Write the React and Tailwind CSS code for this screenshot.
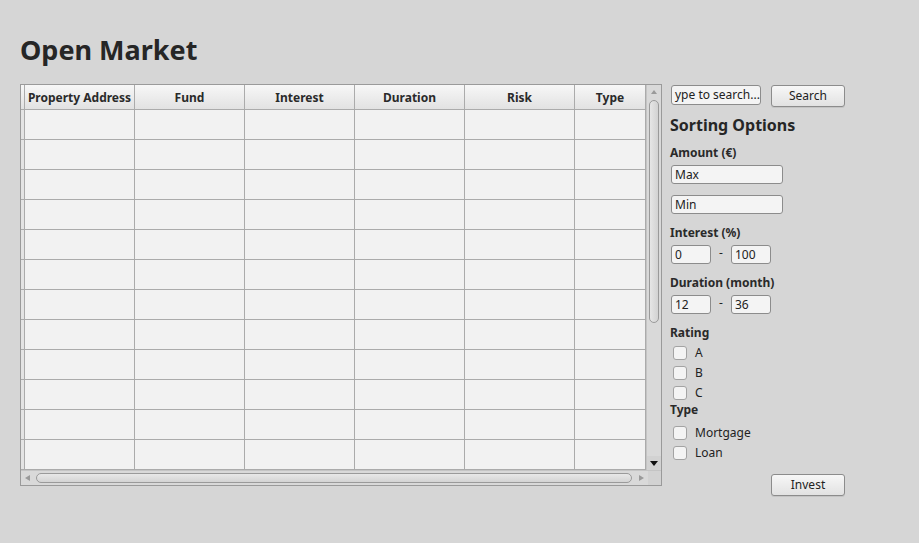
import React from "react";

const columns = ["Property Address", "Fund", "Interest", "Duration", "Risk", "Type"];
const rows = Array.from({ length: 12 });

function Cell({ children, last, header }) {
  return (
    <div
      className={
        (last ? "w-[71px]" : "w-[110px]") +
        " shrink-0 border-r border-[#ababab] flex items-center justify-center"
      }
    >
      {header && <span className="pt-[2px] font-bold text-[12px] text-[#2a2a2a] whitespace-nowrap">{children}</span>}
    </div>
  );
}

function Input({ value, className }) {
  return (
    <div
      className={
        "h-[19px] rounded-[3px] border border-[#8c8c8c] bg-[#f4f4f4] px-[3px] text-[12px] leading-[17px] text-[#222] overflow-hidden whitespace-nowrap " +
        className
      }
    >
      {value}
    </div>
  );
}

function Button({ label }) {
  return (
    <div className="w-[74px] h-[22px] rounded-[3px] border border-[#8c8c8c] bg-gradient-to-b from-[#f7f7f7] to-[#e2e2e2] flex items-center justify-center text-[12px] text-[#222] shadow-[0_1px_0_#c4c4c4]">
      {label}
    </div>
  );
}

function Check({ label }) {
  return (
    <div className="h-[20px] flex items-center">
      <div className="ml-[3px] w-[14px] h-[14px] rounded-[3px] border border-[#a3a3a3] bg-[#f4f4f4]" />
      <span className="ml-[8px] text-[12px] text-[#222]">{label}</span>
    </div>
  );
}

function Label({ children, className = "" }) {
  return <div className={"text-[12px] leading-[17px] font-bold text-[#2a2a2a] " + className}>{children}</div>;
}

export default function App() {
  return (
    <div
      className="w-[919px] h-[543px] bg-[#d6d6d6] pl-[20px] pt-[32px] overflow-hidden"
      style={{ fontFamily: '"Noto Sans", "Open Sans", sans-serif' }}
    >
      <h1 className="text-[27px] leading-[36px] font-bold text-[#262626]">Open Market</h1>

      <div className="mt-[16px] flex items-start">
        {/* table */}
        <div className="w-[642px] h-[402px] border border-[#9a9a9a] bg-[#f2f2f2] flex flex-col">
          <div className="flex flex-1">
            <div className="flex flex-col">
              {/* header */}
              <div className="flex h-[25px] border-b border-[#ababab] bg-gradient-to-b from-[#f7f7f7] to-[#e2e2e2]">
                <div className="w-[3px] border-r border-[#ababab] shrink-0 box-content" />
                {columns.map((c, i) => (
                  <Cell key={c} header last={i === columns.length - 1}>{c}</Cell>
                ))}
              </div>
              {rows.map((_, r) => (
                <div key={r} className="flex h-[30px] border-b border-[#ababab]">
                  <div className="w-[3px] border-r border-[#ababab] shrink-0 box-content bg-[#e4e4e4]" />
                  {columns.map((c, i) => (
                    <Cell key={c} last={i === columns.length - 1} />
                  ))}
                </div>
              ))}
            </div>
            {/* vertical scrollbar */}
            <div className="w-[15px] h-[385px] bg-[#d9d9d9] border-l border-[#c4c4c4] flex flex-col items-center">
              <div className="h-[14px] flex items-center justify-center">
                <div className="w-0 h-0 border-l-[3px] border-r-[3px] border-b-[4px] border-l-transparent border-r-transparent border-b-[#9a9a9a]" />
              </div>
              <div className="mt-[1px] w-[10px] h-[223px] rounded-[5px] border border-[#9a9a9a] bg-gradient-to-r from-[#e6e6e6] to-[#d2d2d2]" />
              <div className="flex-1" />
              <div className="w-full h-[14px] bg-[#d2d2d2] flex items-center justify-center">
                <div className="w-0 h-0 border-l-[4px] border-r-[4px] border-t-[5px] border-l-transparent border-r-transparent border-t-[#111]" />
              </div>
            </div>
          </div>
          {/* horizontal scrollbar */}
          <div className="h-[15px] flex items-center bg-[#d9d9d9] border-t border-[#c4c4c4]">
            <div className="w-[13px] h-full flex items-center justify-center">
              <div className="w-0 h-0 border-t-[3px] border-b-[3px] border-r-[5px] border-t-transparent border-b-transparent border-r-[#9a9a9a]" />
            </div>
            <div className="ml-[2px] w-[596px] h-[10px] rounded-[5px] border border-[#9a9a9a] bg-gradient-to-b from-[#e8e8e8] to-[#d4d4d4]" />
            <div className="w-[14px] ml-[2px] flex items-center justify-center">
              <div className="w-0 h-0 border-t-[3px] border-b-[3px] border-l-[5px] border-t-transparent border-b-transparent border-l-[#9a9a9a]" />
            </div>
            <div className="flex-1 h-full bg-[#d2d2d2]" />
          </div>
        </div>

        {/* sorting panel */}
        <div className="ml-[8px] w-[180px] flex flex-col">
          <div className="mt-[1px] flex items-start">
            <Input value="ype to search..." className="ml-[1px] w-[90px] h-[20px] px-[2px]" />
            <div className="ml-[10px]">
              <Button label="Search" />
            </div>
          </div>
          <div className="mt-[7px] text-[16px] leading-[22px] font-bold text-[#262626]">Sorting Options</div>
          <Label className="mt-[8px]">Amount (€)</Label>
          <Input value="Max" className="mt-[4px] ml-[1px] w-[112px]" />
          <Input value="Min" className="mt-[11px] ml-[1px] w-[112px]" />

          <Label className="mt-[10px]">Interest (%)</Label>
          <div className="mt-[4px] flex items-center">
            <Input value="0" className="ml-[1px] w-[40px]" />
            <span className="w-[20px] text-center text-[12px] text-[#222] -mt-[4px]">-</span>
            <Input value="100" className="w-[40px]" />
          </div>

          <Label className="mt-[10px]">Duration (month)</Label>
          <div className="mt-[4px] flex items-center">
            <Input value="12" className="ml-[1px] w-[40px]" />
            <span className="w-[20px] text-center text-[12px] text-[#222] -mt-[4px]">-</span>
            <Input value="36" className="w-[40px]" />
          </div>

          <Label className="mt-[10px]">Rating</Label>
          <div className="mt-[2px]">
            <Check label="A" />
            <Check label="B" />
            <Check label="C" />
          </div>
          <Label className="-mt-[2px]">Type</Label>
          <div className="mt-[5px]">
            <Check label="Mortgage" />
            <Check label="Loan" />
          </div>
          <div className="mt-[11px] ml-[101px]">
            <Button label="Invest" />
          </div>
        </div>
      </div>
    </div>
  );
}
